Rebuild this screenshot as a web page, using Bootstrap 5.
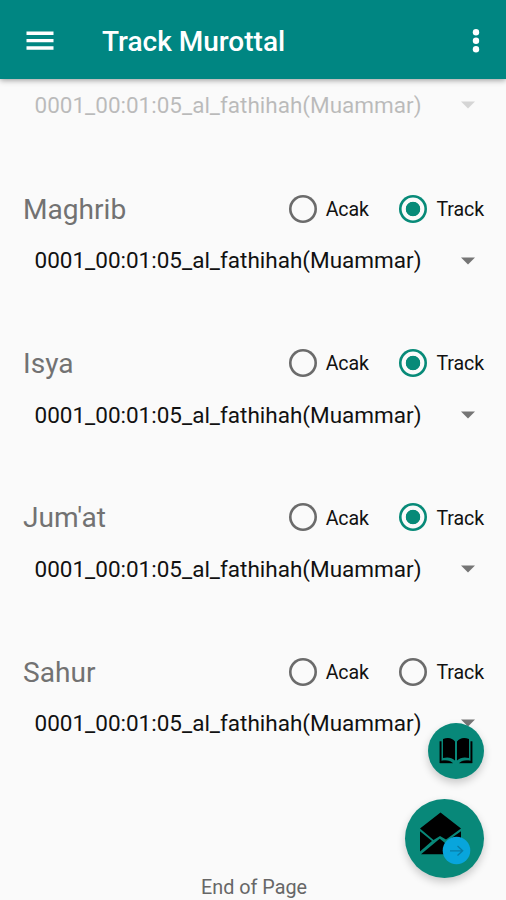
<!DOCTYPE html>
<html lang="id">
<head>
<meta charset="utf-8">
<meta name="viewport" content="width=device-width, initial-scale=1">
<title>Track Murottal</title>
<link href="https://cdn.jsdelivr.net/npm/bootstrap@5.3.0/dist/css/bootstrap.min.css" rel="stylesheet">
<style>
body{font-family:Roboto,"Liberation Sans",sans-serif;background:#fafafa;color:#111;height:900px;overflow:hidden}
.app-bar{height:79px;background:#008682;box-shadow:0 1px 6px rgba(0,0,0,.42);padding:2px 24px 0 26px;z-index:2}
.app-title{font-size:28px;font-weight:500;line-height:1;margin-left:48px;padding-top:2px}
.icon-btn{line-height:0}
.screen{height:821px}
.track-select{height:50.2px;padding:2px 31px 0 34.5px;font-size:22.5px;line-height:1;white-space:nowrap}
.faded{opacity:.27;margin-bottom:53.3px}
.prayer{height:154.2px}
.prayer-head{height:52px;padding:1px 22px 0 23px}
.prayer-name{font-size:28.1px;line-height:1;color:#727272;padding-top:2px}
.choice{font-size:19.6px;line-height:1;gap:9px}
.choice span{padding-top:2px;letter-spacing:-.1px}
.choice:last-child{margin-left:30.5px}
.ring{width:28px;height:28px;margin:0;appearance:none;border-radius:50%;box-shadow:inset 0 0 0 2.6px #6b6b6b}
.ring:checked{box-shadow:inset 0 0 0 2.6px #078a78;background:radial-gradient(circle,#078a78 6.9px,transparent 7.6px)}
.fab{border-radius:50%;background:#088879;box-shadow:0 4px 8px rgba(0,0,0,.2);line-height:0}
.fab-book{width:56px;height:56px;right:22px;top:723px}
.fab-mail{width:79px;height:79px;right:22px;top:799px}
.page-end{font-size:19.8px;line-height:1;color:#676767;padding:79px 0 0 2px}
</style>
<script src="https://cdn.jsdelivr.net/npm/bootstrap@5.3.0/dist/js/bootstrap.bundle.min.js"></script>
</head>
<body class="position-relative">
<header class="app-bar d-flex align-items-center text-white position-relative">
  <button class="btn p-0 border-0 icon-btn" aria-label="Menu"><svg width="28" height="20" viewBox="0 0 28 20"><path d="M.5.5h27v3.400H.5zM.5 7.900h27v3.400H.5zM.5 15.300h27v3.400H.5z" fill="#fff"/></svg></button>
  <h1 class="app-title mb-0">Track Murottal</h1>
  <button class="btn p-0 border-0 icon-btn ms-auto" aria-label="More"><svg width="12" height="26" viewBox="0 0 12 26"><g fill="#fff"><circle cx="6" cy="4.300" r="3.200"/><circle cx="6" cy="12.800" r="3.200"/><circle cx="6" cy="21.300" r="3.200"/></g></svg></button>
</header>
<main class="screen">
  <div class="track-select faded d-flex align-items-center justify-content-between"><span>0001_00:01:05_al_fathihah(Muammar)</span><svg width="14" height="8"><path d="M0 .5h14L7 7.500z" fill="#757575"/></svg></div>
  <section class="prayer">
    <div class="prayer-head d-flex align-items-center"><h2 class="prayer-name mb-0 me-auto fw-normal">Maghrib</h2>
      <label class="choice d-flex align-items-center"><input class="ring" type="radio" name="maghrib"><span>Acak</span></label>
      <label class="choice d-flex align-items-center"><input class="ring" type="radio" name="maghrib" checked><span>Track</span></label></div>
    <div class="track-select d-flex align-items-center justify-content-between"><span>0001_00:01:05_al_fathihah(Muammar)</span><svg width="14" height="8"><path d="M0 .5h14L7 7.500z" fill="#757575"/></svg></div>
  </section>
  <section class="prayer">
    <div class="prayer-head d-flex align-items-center"><h2 class="prayer-name mb-0 me-auto fw-normal">Isya</h2>
      <label class="choice d-flex align-items-center"><input class="ring" type="radio" name="isya"><span>Acak</span></label>
      <label class="choice d-flex align-items-center"><input class="ring" type="radio" name="isya" checked><span>Track</span></label></div>
    <div class="track-select d-flex align-items-center justify-content-between"><span>0001_00:01:05_al_fathihah(Muammar)</span><svg width="14" height="8"><path d="M0 .5h14L7 7.500z" fill="#757575"/></svg></div>
  </section>
  <section class="prayer">
    <div class="prayer-head d-flex align-items-center"><h2 class="prayer-name mb-0 me-auto fw-normal">Jum'at</h2>
      <label class="choice d-flex align-items-center"><input class="ring" type="radio" name="jumat"><span>Acak</span></label>
      <label class="choice d-flex align-items-center"><input class="ring" type="radio" name="jumat" checked><span>Track</span></label></div>
    <div class="track-select d-flex align-items-center justify-content-between"><span>0001_00:01:05_al_fathihah(Muammar)</span><svg width="14" height="8"><path d="M0 .5h14L7 7.500z" fill="#757575"/></svg></div>
  </section>
  <section class="prayer">
    <div class="prayer-head d-flex align-items-center"><h2 class="prayer-name mb-0 me-auto fw-normal">Sahur</h2>
      <label class="choice d-flex align-items-center"><input class="ring" type="radio" name="sahur"><span>Acak</span></label>
      <label class="choice d-flex align-items-center"><input class="ring" type="radio" name="sahur"><span>Track</span></label></div>
    <div class="track-select d-flex align-items-center justify-content-between"><span>0001_00:01:05_al_fathihah(Muammar)</span><svg width="14" height="8"><path d="M0 .5h14L7 7.500z" fill="#757575"/></svg></div>
  </section>
  <p class="page-end text-center mb-0">End of Page</p>
</main>
<button class="fab fab-book btn p-0 border-0 position-absolute d-flex align-items-center justify-content-center" aria-label="Read">
  <svg width="36" height="30" viewBox="0 0 36 30"><path d="M5 3C10 1 14.500 2 17 5.500V24.500C14 21.500 9.500 20.800 5 22zM31 3C26 1 21.500 2 19 5.500V24.500C22 21.500 26.500 20.800 31 22z"/><path d="M1.800 5.500V27H14.500C11.500 24.500 8 24 3.300 25V5.500zM34.200 5.500V27H21.500C24.500 24.500 28 24 32.700 25V5.500z" stroke="#000" stroke-width=".4"/></svg>
</button>
<button class="fab fab-mail btn p-0 border-0 position-absolute" aria-label="Send">
  <svg width="79" height="79" viewBox="0 0 79 79"><path d="M15 29.500 35.500 13.500 56 29.500 41 40.500 35 37 28.500 41z"/><path d="M15 32.200 27 42 15 52.500zM56 32.200V47L43 41.500zM16 55.300 34.700 39.800 54 55.300z"/><circle cx="51.500" cy="51.500" r="13.800" fill="#08a5dc"/><path d="M45 51.800H57.500M52.500 47 57.700 51.800 52.500 56.600" fill="none" stroke="#087da6" stroke-width="1.300"/></svg>
</button>
</body>
</html>
